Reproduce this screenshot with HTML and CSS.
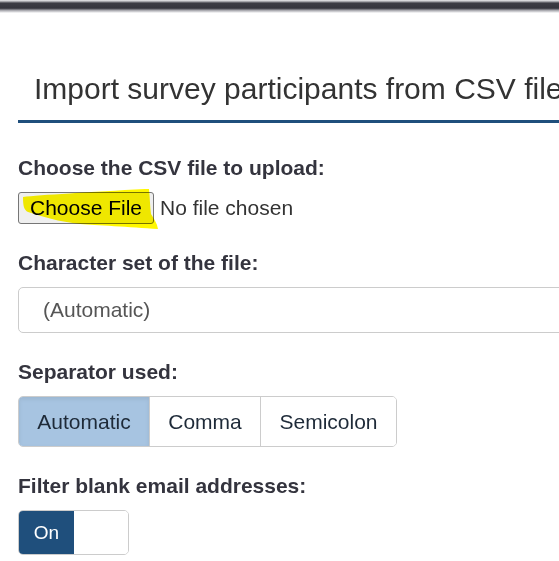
FILE: index.html
```html
<!DOCTYPE html>
<html lang="en">
<head>
<meta charset="utf-8">
<title>Import survey participants from CSV file</title>
<link rel="stylesheet" href="styles.css">
</head>
<body>
<div class="topbar"></div>
<main class="page">
  <h1 class="title">Import survey participants from CSV file</h1>

  <section class="field field-first">
    <label class="field-label">Choose the CSV file to upload:</label>
    <div class="file-row">
      <svg class="marker" viewBox="18 185 150 50" width="150" height="50" aria-hidden="true">
        <path d="M23,196 C40,194 90,191 145,188 L149,188 C150,198 150,206 151,213 C154,218 157,222 158,228 C130,226 95,224 80,223 C60,221 40,215 28,211 C24,209 23,205 23,196 Z" fill="#fff700"/>
      </svg>
      <span class="file-btn">Choose File</span>
      <span class="file-name">No file chosen</span>
    </div>
  </section>

  <section class="field">
    <label class="field-label">Character set of the file:</label>
    <div class="select">(Automatic)</div>
  </section>

  <section class="field">
    <label class="field-label">Separator used:</label>
    <div class="btn-group">
      <span class="seg seg-active">Automatic</span>
      <span class="seg">Comma</span>
      <span class="seg">Semicolon</span>
    </div>
  </section>

  <section class="field">
    <label class="field-label">Filter blank email addresses:</label>
    <div class="toggle">
      <span class="toggle-on">On</span>
      <span class="toggle-off"></span>
    </div>
  </section>
</main>
</body>
</html>
```

FILE: styles.css
```css
html, body {
  margin: 0;
  padding: 0;
  background: #ffffff;
}

body {
  font-family: "Liberation Sans", Arial, sans-serif;
  font-size: 21px;
  color: #333333;
  overflow: hidden;
}

.topbar {
  height: 13px;
  background: linear-gradient(to bottom, #f0f0f2 0px, #8a8a90 2px, #3c3c44 3px, #34343c 8px, #55555d 9px, #9c9ca2 10px, #dcdcdf 12px, #ffffff 13px);
}

.page {
  padding-left: 18px;
}

.title {
  margin: 58px 0 0 0;
  padding: 0 0 14px 16px;
  font-size: 30px;
  font-weight: normal;
  line-height: 35px;
  color: #333333;
  white-space: nowrap;
  border-bottom: 3px solid #1f4f7c;
}

.field {
  margin-top: 24px;
}

.field-first {
  margin-top: 30px;
}

.field-label {
  display: block;
  font-weight: bold;
  line-height: 29px;
  color: #34343e;
  margin-bottom: 10px;
}

.file-row {
  position: relative;
  display: flex;
  align-items: center;
  height: 32px;
}

.marker {
  position: absolute;
  left: 0;
  top: -6px;
  mix-blend-mode: multiply;
  pointer-events: none;
}

.file-btn {
  box-sizing: border-box;
  height: 32px;
  width: 136px;
  display: flex;
  align-items: center;
  justify-content: center;
  background: #efefef;
  border: 1px solid #767676;
  border-radius: 3px;
  color: #000000;
}

.file-name {
  margin-left: 6px;
  color: #333333;
}

.select {
  box-sizing: border-box;
  height: 46px;
  width: 600px;
  display: flex;
  align-items: center;
  padding-left: 24px;
  border: 1px solid #cccccc;
  border-radius: 5px;
  color: #555555;
}

.btn-group {
  display: inline-flex;
  height: 51px;
  box-sizing: border-box;
  border: 1px solid #cccccc;
  border-radius: 5px;
  overflow: hidden;
}

.seg {
  display: flex;
  align-items: center;
  justify-content: center;
  color: #1e2a38;
  background: #ffffff;
  border-left: 1px solid #cccccc;
  width: 110px;
}

.seg:first-child {
  border-left: none;
  width: 130px;
}

.seg:last-child {
  width: 135px;
}

.seg-active {
  background: #a7c4e1;
  box-shadow: inset 0 2px 4px rgba(0, 0, 0, 0.08);
}

.toggle {
  display: flex;
  width: 111px;
  height: 45px;
  box-sizing: border-box;
  border: 1px solid #cccccc;
  border-radius: 5px;
  overflow: hidden;
}

.toggle-on {
  width: 55px;
  display: flex;
  align-items: center;
  justify-content: center;
  background: #1f4f7c;
  color: #ffffff;
  font-size: 19px;
}

.toggle-off {
  flex: 1;
  background: #ffffff;
}
```
